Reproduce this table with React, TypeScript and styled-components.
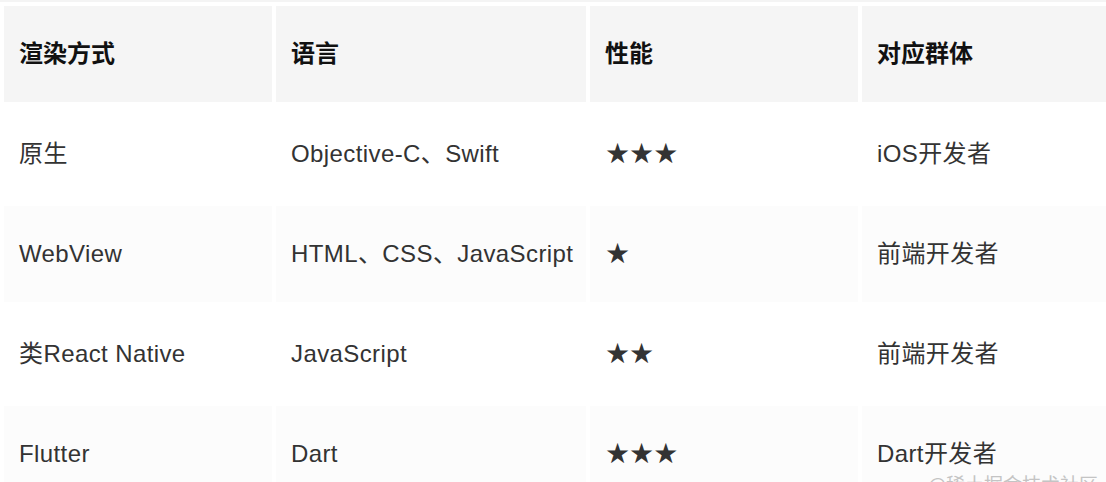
import React from "react";
import styled, { createGlobalStyle } from "styled-components";

const Global = createGlobalStyle`
  html, body { margin: 0; padding: 0; background: #fff; overflow: hidden; }
  body { width: 1106px; height: 482px; }
`;

const Page = styled.div`
  position: relative;
  width: 1106px;
  height: 482px;
  overflow: hidden;
  font-family: "Liberation Sans", "Noto Sans CJK SC", sans-serif;
  color: #333;
`;

const TopStrip = styled.div`
  height: 2px;
  background: #f4f4f4;
`;

const Table = styled.table`
  border-collapse: separate;
  border-spacing: 4px;
  table-layout: fixed;
  width: 1130px;
  margin: 0;
`;

const HeadCell = styled.th`
  height: 96px;
  box-sizing: border-box;
  padding: 0 15px;
  background: #f5f5f5;
  text-align: left;
  font-size: 24px;
  line-height: 28px;
  font-weight: 700;
  color: #111;
  vertical-align: middle;
`;

const Cell = styled.td<{ $shaded: boolean }>`
  height: 96px;
  box-sizing: border-box;
  padding: 0 15px;
  background: ${(p) => (p.$shaded ? "#fcfcfc" : "#fff")};
  font-size: 24px;
  line-height: 28px;
  letter-spacing: 0.4px;
  color: #333;
  vertical-align: middle;
  white-space: nowrap;
`;

const Line = styled.div`
  height: 28px;
  line-height: 28px;
  overflow: visible;
`;

const Stars = styled.span`
  font-family: "DejaVu Sans", sans-serif;
  font-size: 28px;
  line-height: 28px;
  letter-spacing: -1px;
  color: #333;
`;

const Watermark = styled.div`
  position: absolute;
  left: 928px;
  top: 470px;
  font-family: "Noto Sans CJK SC", sans-serif;
  font-size: 19px;
  color: #c4c4c4;
  white-space: nowrap;
`;

const rows = [
  { mode: "原生", lang: "Objective-C、Swift", perf: 3, who: "iOS开发者" },
  { mode: "WebView", lang: "HTML、CSS、JavaScript", perf: 1, who: "前端开发者" },
  { mode: "类React Native", lang: "JavaScript", perf: 2, who: "前端开发者" },
  { mode: "Flutter", lang: "Dart", perf: 3, who: "Dart开发者" },
];

export default function App() {
  return (
    <Page>
      <Global />
      <TopStrip />
      <Table>
        <colgroup>
          <col style={{ width: 268 }} />
          <col style={{ width: 310 }} />
          <col style={{ width: 268 }} />
          <col style={{ width: 268 }} />
        </colgroup>
        <thead>
          <tr>
            <HeadCell><Line>渲染方式</Line></HeadCell>
            <HeadCell><Line>语言</Line></HeadCell>
            <HeadCell><Line>性能</Line></HeadCell>
            <HeadCell><Line>对应群体</Line></HeadCell>
          </tr>
        </thead>
        <tbody>
          {rows.map((r, i) => (
            <tr key={r.mode}>
              <Cell $shaded={i % 2 === 1}><Line>{r.mode}</Line></Cell>
              <Cell $shaded={i % 2 === 1}><Line>{r.lang}</Line></Cell>
              <Cell $shaded={i % 2 === 1}>
                <Line>
                  <Stars>{"★".repeat(r.perf)}</Stars>
                </Line>
              </Cell>
              <Cell $shaded={i % 2 === 1}><Line>{r.who}</Line></Cell>
            </tr>
          ))}
        </tbody>
      </Table>
      <Watermark>@稀土掘金技术社区</Watermark>
    </Page>
  );
}
